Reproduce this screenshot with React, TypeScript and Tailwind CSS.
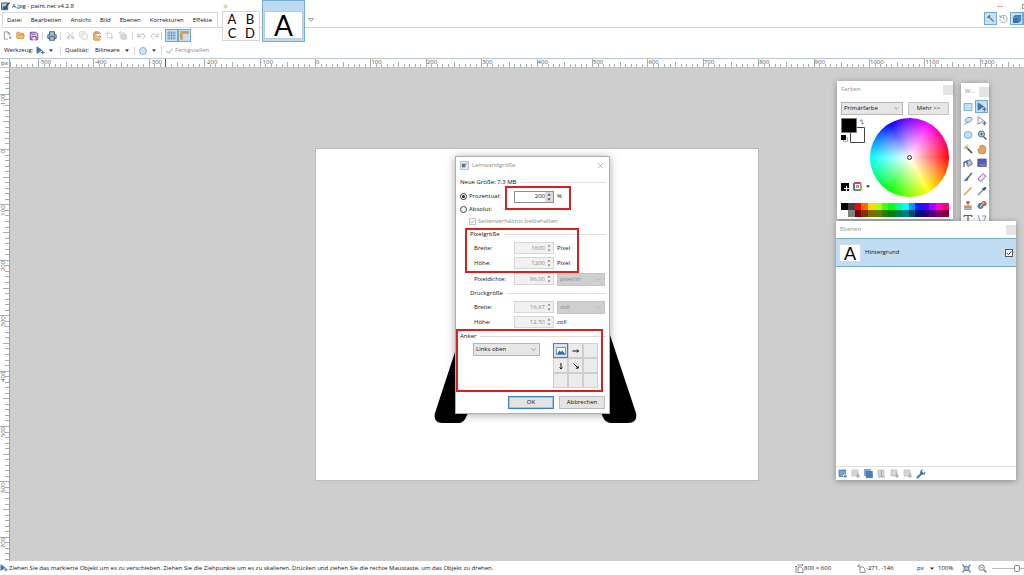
import type { ReactNode } from "react";
import {
  ChevronDown,
  ClipboardPaste,
  Copy,
  Crop,
  FolderOpen,
  Printer,
  Save,
  Scissors,
  X
} from "lucide-react";

const menus = ["Datei", "Bearbeiten", "Ansicht", "Bild", "Ebenen", "Korrekturen", "Effekte"];

const palette = [
  ["#000000", "#404040", "#ff0000", "#ff6a00", "#ffd800", "#b6ff00", "#4cff00", "#00ff21", "#00ff90", "#00ffff", "#0094ff", "#0026ff", "#4800ff", "#b200ff", "#ff00dc", "#ff006e"],
  ["#ffffff", "#808080", "#7f0000", "#7f3300", "#7f6a00", "#5b7f00", "#267f00", "#007f0e", "#007f46", "#007f7f", "#004a7f", "#00137f", "#21007f", "#57007f", "#7f006e", "#7f0037"]
];

const UNIT = 55.4;

function MoveIcon({ className = "size-[9px]", hollow = false }: { className?: string; hollow?: boolean }) {
  return (
    <svg viewBox="0 0 10 10" className={`shrink-0 ${className}`} aria-hidden="true">
      <path d="M1 .8v7.4L6.6 4.6z" fill={hollow ? "#fff" : "#3f78a8"} stroke={hollow ? "#6b7580" : "#3f78a8"} strokeWidth=".8" />
      <path d="M7.4 5v4.4M5.2 7.2h4.4" stroke="#4e6f8c" strokeWidth="1.1" />
    </svg>
  );
}

function HorizontalRuler() {
  const ticks = Array.from({ length: 184 }, (_, i) => i - 55);
  return (
    <div className="flex h-[10px] shrink-0 border-y border-[#b9c6cc] bg-white">
      <span className="w-[10px] shrink-0 border-r border-[#8fa3ad] text-center text-[6px] leading-[8px] text-[#444]">px</span>
      <svg className="h-2 min-w-0 flex-1" aria-hidden="true">
        {ticks.map((t) => {
          const x = Math.round(305 + (t * UNIT) / 10) + 0.5;
          const top = t % 10 === 0 ? 0 : t % 5 === 0 ? 3 : 5;
          return <path key={t} d={`M${x} ${top}V8`} stroke="#9fb0b8" />;
        })}
        {ticks.filter((t) => t % 10 === 0).map((t) => (
          <text key={t} x={306 + (t * UNIT) / 10} y="5" fontSize="6" fill="#555">{t * 10}</text>
        ))}
        <path d="M155.500 0V8" stroke="#4d6570" />
      </svg>
    </div>
  );
}

function VerticalRuler() {
  const ticks = Array.from({ length: 90 }, (_, i) => i - 14);
  return (
    <svg className="h-full w-[10px] shrink-0 border-r border-[#8fa3ad] bg-white" aria-hidden="true">
      {ticks.map((t) => {
        const y = Math.round(81 + (t * UNIT) / 10) + 0.5;
        const left = t % 10 === 0 ? 0 : t % 5 === 0 ? 3 : 5;
        return <path key={t} d={`M${left} ${y}H9`} stroke="#9fb0b8" />;
      })}
      {ticks.filter((t) => t % 10 === 0).map((t) => (
        <text key={t} transform={`translate(5 ${82 + (t * UNIT) / 10}) rotate(-90)`} textAnchor="end" fontSize="6" fill="#555">{t * 10}</text>
      ))}
    </svg>
  );
}

function Divider() {
  return <span className="h-2 w-px shrink-0 bg-[#d4d4d4]" />;
}

function ToolButton({ label, active, children }: { label: string; active?: boolean; children: ReactNode }) {
  return (
    <button
      type="button"
      aria-label={label}
      className={`flex h-[13px] w-[13px] shrink-0 items-center justify-center ${active ? "border border-[#6fa9cf] bg-[#c3e0f5]" : ""}`}
    >
      {children}
    </button>
  );
}

function DownArrow() {
  return (
    <svg viewBox="0 0 4 3" className="h-[3px] w-1 shrink-0" aria-hidden="true">
      <path d="M0 .5h4L2 2.800z" fill="#222" />
    </svg>
  );
}

function Header() {
  return (
    <header className="relative z-10 flex h-7 shrink-0">
      <div className="flex w-[218px] shrink-0 flex-col">
        <div className="flex h-3 items-center gap-[2px] pl-px">
          <svg viewBox="0 0 10 10" className="size-[9px]" aria-hidden="true">
            <path d="M.5 1h7v7.500h-7z" fill="#b8c9de" stroke="#35507c" />
            <path d="M2 5h5v3H2z" fill="#35507c" />
            <path d="M9.500.5 5 5.500" stroke="#24405f" strokeWidth="1.400" />
          </svg>
          <h1>A.jpg - paint.net v4.2.8</h1>
        </div>
        <nav className="ml-[2px] flex h-4 items-center gap-[9px] border border-[#d8d8d8] pl-1">
          {menus.map((menu) => (
            <button key={menu} type="button">{menu}</button>
          ))}
        </nav>
      </div>

      <div className="flex flex-1 items-start border-b border-[#d0d0d0]">
        <button type="button" aria-label="Bild 1" className="relative ml-1 mt-[11px] grid h-[30px] w-[38px] shrink-0 grid-cols-2 place-items-center border border-[#d6d6d6] bg-white font-[Lato] text-[13px] leading-[14px] text-black">
          <span>A</span>
          <span>B</span>
          <span>C</span>
          <span>D</span>
          <svg viewBox="0 0 6 6" className="absolute -top-2 left-0 size-[5px]" aria-hidden="true">
            <path d="M3 0v6M0 3h6M1 1l4 4M5 1 1 5" stroke="#e5cf96" />
          </svg>
        </button>
        <button type="button" aria-label="Bild 2" className="ml-[2px] flex h-[42px] w-[43px] shrink-0 items-end border border-[#74aed0] bg-[#bddcf4] px-px pb-[2px]">
          <span className="flex h-7 w-full items-center justify-center border border-[#b6cad8] bg-white font-[Lato] text-[28px] leading-[28px] text-black">A</span>
        </button>
        <button type="button" aria-label="Bildliste" className="ml-[3px] mt-[18px]">
          <svg viewBox="0 0 6 4" className="h-1 w-[6px]" aria-hidden="true">
            <path d="M.5.5h5L3 3.300z" fill="none" stroke="#8c8c8c" strokeWidth=".8" />
          </svg>
        </button>

        <div className="-mr-[1px] ml-auto flex flex-col">
          <div className="flex h-3 items-center justify-end gap-[19px] text-[#999]">
            <span className="h-px w-[6px] bg-[#c9a9a9]" />
            <span className="h-[5px] w-[3px] border border-r-0 border-[#999]" />
          </div>
          <div className="flex items-center">
            <ToolButton label="Werkzeuge" active>
              <svg viewBox="0 0 10 10" className="size-[9px]" aria-hidden="true">
                <path d="m3 3 5.500 5.500" stroke="#596c7d" strokeWidth="1.200" />
                <path d="m1 3.500 3-2.500 1.200 1L2.400 4.800z" fill="#596c7d" />
              </svg>
            </ToolButton>
            <ToolButton label="Verlauf">
              <svg viewBox="0 0 10 10" className="size-[9px]" fill="none" stroke="#8795a0" aria-hidden="true">
                <path d="M1.500 3.500a4 4 0 1 1-.5 2M1 1.200v2.500h2.500M5 3v2.400h2" strokeWidth=".9" />
              </svg>
            </ToolButton>
            <ToolButton label="Ebenen" active>
              <svg viewBox="0 0 10 10" className="size-[10px]" aria-hidden="true">
                <path d="M3 1h6v5.500L7 9H1V3.500z" fill="#3774ac" />
                <path d="M1.500 3.500H7V9M3 2h5v6" fill="none" stroke="#6fa2cd" strokeWidth=".6" />
              </svg>
            </ToolButton>
            <span className="h-[13px] w-[2px] bg-[#6fa9cf]" />
          </div>
        </div>
      </div>
    </header>
  );
}

function Toolbars() {
  return (
    <>
      <div className="flex h-[15px] shrink-0 items-center pl-px">
        <ToolButton label="Neu">
          <svg viewBox="0 0 10 10" className="size-[9px]" fill="none" stroke="#777" strokeWidth=".8" aria-hidden="true">
            <path d="M7.500 5V3L5.500 1H1.500v8h4M5.500 1v2h2M8 6v3M6.500 7.500h3" />
          </svg>
        </ToolButton>
        <ToolButton label="Öffnen"><FolderOpen className="size-[9px] fill-[#f2c36b] text-[#c58a35]" /></ToolButton>
        <ToolButton label="Speichern"><Save className="size-[10px] fill-[#eadcf0] text-[#7b4f9b]" strokeWidth={2.5} /></ToolButton>
        <span className="w-[2px]" />
        <Divider />
        <span className="w-[2px]" />
        <ToolButton label="Drucken"><Printer className="size-[10px] fill-[#a9c2dc] text-[#4c6480]" strokeWidth={2.5} /></ToolButton>
        <span className="w-[2px]" />
        <Divider />
        <span className="w-[3px]" />
        <ToolButton label="Ausschneiden"><Scissors className="size-[9px] -rotate-90 text-[#b5b5b5]" /></ToolButton>
        <ToolButton label="Kopieren"><Copy className="size-[9px] text-[#bdbdbd]" /></ToolButton>
        <ToolButton label="Einfügen"><ClipboardPaste className="size-[10px] fill-[#edbd78] text-[#b98340]" /></ToolButton>
        <ToolButton label="Zuschneiden"><Crop className="size-[9px] text-[#c0c0c0]" /></ToolButton>
        <ToolButton label="Auswahl aufheben">
          <svg viewBox="0 0 10 10" className="size-[9px]" fill="none" stroke="#bdbdbd" aria-hidden="true">
            <path d="M1 2h7M2.500 0v7h6V3" strokeDasharray="1.500 .6" />
            <path d="M4 4h5v5H4z" fill="#ddd" />
          </svg>
        </ToolButton>
        <span className="w-[3px]" />
        <Divider />
        <span className="w-[2px]" />
        <ToolButton label="Rückgängig">
          <svg viewBox="0 0 10 8" className="h-2 w-[9px]" fill="none" stroke="#aaa" aria-hidden="true"><path d="M1 1v4h4M1.500 4.500C3 1.500 8 1 8.500 3.500 8.800 5.500 7.500 6.500 6 7.500" /></svg>
        </ToolButton>
        <ToolButton label="Wiederholen">
          <svg viewBox="0 0 10 8" className="h-2 w-[9px] -scale-x-100" fill="none" stroke="#bbb" aria-hidden="true"><path d="M1 1v4h4M1.500 4.500C3 1.500 8 1 8.500 3.500 8.800 5.500 7.500 6.500 6 7.500" /></svg>
        </ToolButton>
        <Divider />
        <span className="w-[3px]" />
        <ToolButton label="Pixelraster" active>
          <svg viewBox="0 0 9 9" className="size-[9px]" aria-hidden="true"><path d="M0 2h9M0 4.500h9M0 7h9M2 0v9M4.500 0v9M7 0v9" stroke="#6f93b3" strokeWidth=".8" /></svg>
        </ToolButton>
        <ToolButton label="Lineale" active>
          <svg viewBox="0 0 9 9" className="size-[9px]" aria-hidden="true">
            <path d="M0 0h9v3H3v6H0z" fill="#d9a969" />
            <path d="M3 0v2M5 0v2M7 0v2M0 4h2M0 6h2" stroke="#9c6f38" strokeWidth=".5" />
          </svg>
        </ToolButton>
      </div>

      <div className="flex h-[15px] shrink-0 items-center pl-1">
        <span className="w-8">Werkzeug:</span>
        <button type="button" aria-label="Werkzeug wählen" className="flex w-6 items-center gap-1">
          <MoveIcon />
          <DownArrow />
        </button>
        <Divider />
        <label htmlFor="quality" className="ml-1 w-[30px]">Qualität:</label>
        <span className="flex w-[39px] items-center">
          <select id="quality" className="w-[30px] appearance-none">
            <option>Bilineare</option>
          </select>
          <DownArrow />
        </span>
        <Divider />
        <button type="button" aria-label="Auswahlmodus" className="ml-1 flex w-[22px] items-center gap-[5px]">
          <span className="size-2 rounded-full border border-[#7fb0d4] bg-[#cfe6f7]" />
          <DownArrow />
        </button>
        <Divider />
        <button type="button" disabled className="ml-1 flex items-center gap-[2px] text-[#8d8d8d]">
          <svg viewBox="0 0 7 6" className="h-[6px] w-[7px]" fill="none" stroke="#999" aria-hidden="true"><path d="m.5 3 2 2.200L6.500.5" /></svg>
          Fertigstellen
        </button>
      </div>
    </>
  );
}

function Spinner({ id, label, value, disabled }: { id: string; label: string; value: string; disabled?: boolean }) {
  return (
    <span className={`flex h-3 w-10 shrink-0 border ${disabled ? "border-[#d5d5d5] bg-[#f1f1f1] text-[#8a8a8a]" : "border-[#8d8d8d] bg-white"}`}>
      <input id={id} aria-label={label} defaultValue={value} disabled={disabled} className="min-w-0 flex-1 text-right" />
      <svg viewBox="0 0 8 10" className={`h-[10px] w-2 ${disabled ? "" : "bg-[#dcdcdc]"}`} aria-hidden="true">
        <path d="M2.500 3.500h3L4 1.500zM2.500 6.500h3L4 8.500z" fill={disabled ? "#7d7d7d" : "#333"} />
      </svg>
    </span>
  );
}

function Select({ label, value, disabled, className }: { label: string; value: string; disabled?: boolean; className: string }) {
  return (
    <span className={`relative flex h-[13px] items-center border ${disabled ? "border-[#c4c4c4] bg-[#cfcfcf] text-[#858585]" : "border-[#b5b5b5] bg-[#e6e6e6]"} ${className}`}>
      <select aria-label={label} disabled={disabled} className="w-full appearance-none pl-[2px] opacity-100">
        <option>{value}</option>
      </select>
      <ChevronDown className={`pointer-events-none absolute right-[2px] size-[7px] ${disabled ? "text-[#aaa]" : "text-[#666]"}`} />
    </span>
  );
}

function GroupTitle({ children, className = "" }: { children: ReactNode; className?: string }) {
  return (
    <h3 className={`flex items-center gap-1 ${className}`}>
      {children}
      <span className="h-px flex-1 bg-[#dedede]" />
    </h3>
  );
}

function Anchor() {
  const arrows = ["", "M1.500 5h6M6 3.500 7.500 5 6 6.500", "", "M5 2v6M3.500 6.500 5 8l1.500-1.500", "M2.500 2.500l4.500 4.500M7.200 4.800v2.400H4.800", "", "", "", ""];
  return (
    <div className="grid grid-cols-3">
      {arrows.map((d, i) => (
        <button
          key={i}
          type="button"
          aria-label={`Anker ${i + 1}`}
          className={`flex size-[15px] items-center justify-center border ${i === 0 ? "border-[#3d86b8] bg-[#cfe5f5]" : "border-[#cfcfcf] bg-[#ececec]"}`}
        >
          {i === 0 && (
            <svg viewBox="0 0 10 8" className="h-2 w-[10px]" aria-hidden="true">
              <path d="M.5.5h9v7h-9z" fill="#fff" stroke="#5b7f9c" strokeWidth=".8" />
              <path d="m1 7 2.500-3.500L5 5l1.500-1.500L9 7z" fill="#386b95" />
            </svg>
          )}
          {d && <svg viewBox="0 0 10 10" className="size-[10px]" fill="none" stroke="#111" aria-hidden="true"><path d={d} /></svg>}
        </button>
      ))}
    </div>
  );
}

function CanvasSizeDialog() {
  return (
    <section role="dialog" aria-label="Leinwandgröße" className="absolute left-[445px] top-[88px] w-[155px] border border-[#b0b0b0] bg-white pb-1 shadow-[0_1px_8px_rgba(0,0,0,0.35)]">
      <div className="flex h-[17px] items-center gap-[3px] px-1 text-[#8a8a8a]">
        <svg viewBox="0 0 10 10" className="size-[9px]" aria-hidden="true">
          <path d="M.5.5h9v9h-9z" fill="#e8eef4" stroke="#aab4bd" />
          <path d="M2 3h4v4H2z" fill="#4d6f90" />
          <path d="M8 2 5 6" stroke="#8a98a5" />
        </svg>
        <h2>Leinwandgröße</h2>
        <button type="button" aria-label="Schließen" className="ml-auto"><X className="size-[9px]" strokeWidth={1.5} /></button>
      </div>

      <GroupTitle className="h-4 pl-1 pr-[3px]">Neue Größe: 7,3 MB</GroupTitle>
      <div className="flex h-[13px] items-center pl-1">
        <label className="flex w-[54px] items-center gap-[2px]">
          <input type="radio" name="mode" defaultChecked className="size-[7px] appearance-none rounded-full border border-[#333] bg-[#222] p-px [background-clip:content-box]" />
          Prozentual:
        </label>
        <Spinner id="percent" label="Prozent" value="200" />
        <span className="ml-[3px]">%</span>
      </div>
      <label className="flex h-3 items-center gap-[2px] pl-1">
        <input type="radio" name="mode" className="size-[7px] appearance-none rounded-full border border-[#444]" />
        Absolut:
      </label>
      <label className="flex h-3 items-center gap-[2px] pl-[13px] text-[#8a8a8a]">
        <span className="relative flex">
          <input type="checkbox" defaultChecked disabled className="size-[7px] appearance-none border border-[#c4c4c4]" />
          <svg viewBox="0 0 7 7" className="absolute inset-0 size-[7px]" fill="none" stroke="#aaa" aria-hidden="true"><path d="m1.500 3.500 1.500 1.500L5.500 2" /></svg>
        </span>
        Seitenverhältnis beibehalten
      </label>

      <GroupTitle className="h-[14px] pl-[14px] pr-[3px]">Pixelgröße</GroupTitle>
      <div className="flex h-[14px] items-center pl-[18px]">
        <label htmlFor="pixel-width" className="w-10">Breite:</label>
        <Spinner id="pixel-width" label="Breite in Pixel" value="1600" disabled />
        <span className="ml-[3px]">Pixel</span>
      </div>
      <div className="flex h-4 items-center pl-[18px]">
        <label htmlFor="pixel-height" className="w-10">Höhe:</label>
        <Spinner id="pixel-height" label="Höhe in Pixel" value="1200" disabled />
        <span className="ml-[3px]">Pixel</span>
      </div>
      <div className="flex h-4 items-center pl-[18px]">
        <label htmlFor="density" className="w-10">Pixeldichte:</label>
        <Spinner id="density" label="Pixeldichte" value="96,00" disabled />
        <Select label="Einheit der Dichte" value="pixel/in" disabled className="ml-[3px] w-12" />
      </div>
      <GroupTitle className="h-3 pl-[14px] pr-[3px]">Druckgröße</GroupTitle>
      <div className="flex h-4 items-center pl-[18px]">
        <label htmlFor="print-width" className="w-10">Breite:</label>
        <Spinner id="print-width" label="Druckbreite" value="16,67" disabled />
        <Select label="Druckeinheit" value="zoll" disabled className="ml-[3px] w-12" />
      </div>
      <div className="flex h-[14px] items-center pl-[18px]">
        <label htmlFor="print-height" className="w-10">Höhe:</label>
        <Spinner id="print-height" label="Druckhöhe" value="12,50" disabled />
        <span className="ml-[3px]">zoll</span>
      </div>

      <GroupTitle className="h-[14px] pl-1 pr-[3px]">Anker</GroupTitle>
      <div className="flex items-start justify-between pl-[17px] pr-[11px]">
        <Select label="Anker" value="Links oben" className="w-[67px]" />
        <Anchor />
      </div>
      <div className="mt-2 flex justify-end gap-[5px] pr-1">
        <button type="button" className="h-[13px] w-[46px] border border-[#3d86b8] bg-[#e3e3e3] leading-[11px] ring-1 ring-inset ring-[#9cc6e4]">OK</button>
        <button type="button" className="h-[13px] w-[46px] border border-[#bdbdbd] bg-[#e3e3e3] leading-[11px]">Abbrechen</button>
      </div>

      {/* highlighted areas */}
      <div className="pointer-events-none absolute left-[49px] top-[29px] h-6 w-[66px] border-2 border-[#d8201f]" />
      <div className="pointer-events-none absolute left-[9px] top-[71px] h-[45px] w-[114px] border-2 border-[#d8201f]" />
      <div className="pointer-events-none absolute left-0 top-[172px] h-[63px] w-[147px] border-2 border-[#d8201f]" />
    </section>
  );
}

function PanelTitle({ children }: { children: ReactNode }) {
  return (
    <div className="flex h-[17px] shrink-0 items-center justify-between pl-1 text-[#8f8f8f]">
      <h2>{children}</h2>
      <button type="button" aria-label="Schließen" className="size-[10px] bg-[#e4e4e4]" />
    </div>
  );
}

function ColorsPanel() {
  return (
    <section className="absolute right-[71px] top-[13px] w-[116px] bg-white pb-[2px] shadow-[0_1px_6px_rgba(0,0,0,0.35)]">
      <PanelTitle>Farben</PanelTitle>
      <div className="flex items-center justify-between px-1 pt-1">
        <Select label="Farbe" value="Primärfarbe" className="w-[62px]" />
        <button type="button" className="h-[13px] w-[41px] border border-[#c4c4c4] bg-[#e6e6e6] leading-[11px]">Mehr &gt;&gt;</button>
      </div>
      <div className="flex justify-between px-1 pt-[3px]">
        <div className="flex w-6 flex-col justify-between pb-[6px]">
          <svg viewBox="0 0 25 26" className="h-[26px] w-[25px]" aria-hidden="true">
            <path d="M9.500 9.500h14v15h-14z" fill="#fff" stroke="#444" />
            <path d="M.5.5h15v14H.5z" fill="#000" stroke="#777" />
            <path d="M19 2.500h2.500V6M20.500 1 19 2.500 20.500 4M20 5l1.500 1.500L23 5" fill="none" stroke="#7793ab" strokeWidth=".8" />
            <path d="M2.500 19.500h4v4h-4z" fill="#fff" stroke="#aaa" />
            <path d="M0 17h5v5H0z" fill="#000" />
          </svg>
          <div className="flex items-center gap-1">
            <svg viewBox="0 0 8 8" className="size-2 shrink-0" aria-hidden="true">
              <path d="M0 0h8v8H0z" fill="#000" />
              <path d="M5.500 3v5M3 5.500h5" stroke="#fff" strokeWidth="1.200" />
            </svg>
            <svg viewBox="0 0 9 9" className="size-[9px] shrink-0" fill="none" strokeWidth="2" aria-hidden="true">
              <path d="M1 1h7" stroke="#b75064" />
              <path d="M8 1v7" stroke="#e29b48" />
              <path d="M8 8H1" stroke="#669865" />
              <path d="M1 8V1" stroke="#5371b5" />
              <path d="M3.500 3.500h2v2h-2z" stroke="#9a748e" strokeWidth="1" />
            </svg>
            <DownArrow />
          </div>
        </div>
        <div className="flex size-[79px] items-center justify-center rounded-full bg-[radial-gradient(closest-side,#fff,rgba(255,255,255,0)),conic-gradient(from_90deg,#f00,#ff0,#0f0,#0ff,#00f,#f0f,#f00)]">
          <span className="size-[5px] rounded-full border border-[#333] bg-white" />
        </div>
      </div>
      <div className="mt-[6px] grid grid-cols-16 px-1">
        {palette.flat().map((color) => (
          <span key={color} className="h-[7px]" style={{ backgroundColor: color }} />
        ))}
      </div>
    </section>
  );
}

function ToolsPanel() {
  const tools: [string, ReactNode][] = [
    ["Rechteckauswahl", <path key="a" d="M1 1.500h8v7H1z" fill="#c4e0f5" stroke="#6da0c8" strokeWidth=".8" />],
    ["Verschieben", <MoveIcon key="b" className="size-[10px]" />],
    ["Lassoauswahl", <g key="c" fill="none" stroke="#6797bd"><path d="M3 6C0 3 5 1 8 1.500 11 3 7 7 4 6.500z" fill="#c4e0f5" /><path d="M4 6 1.500 9" /></g>],
    ["Auswahl verschieben", <MoveIcon key="d" className="size-[10px]" hollow />],
    ["Ellipsenauswahl", <ellipse key="e" cx="5" cy="5" rx="4" ry="3.500" fill="#c4e0f5" stroke="#6da0c8" strokeWidth=".8" />],
    ["Zoom", <g key="f"><circle cx="4.500" cy="4" r="3" fill="#a9d0e9" stroke="#4e6c86" /><path d="m6.500 6.500 3 3" stroke="#4e5f70" strokeWidth="1.500" /><path d="M3 4h3M4.500 2.500v3" stroke="#35607f" strokeWidth=".7" /></g>],
    ["Zauberstab", <g key="g"><path d="m3 3 6 6" stroke="#444" strokeWidth="1.600" /><path d="M1 1.500 5 5M4 0v3M0 4h3" stroke="#d3a756" strokeWidth=".8" /></g>],
    ["Hand", <path key="h" d="M2 9.500.8 5.500l1-.7 1 1V2l1-.5.7.5.5-1 1 .1.500.9.8-.2.600.9.8.3V7L8 9.500z" fill="#e2a65e" stroke="#a86d32" strokeWidth=".6" />],
    ["Füllen", <g key="i"><path d="m3 4 4-2.500L9.500 6 5 8.500z" fill="#b9c2cb" stroke="#59636e" strokeWidth=".8" /><path d="M1 9V4.500L4 3v3" fill="none" stroke="#4876a3" strokeWidth="1.400" /></g>],
    ["Farbverlauf", <g key="j"><path d="M.8 1h8.500v7.500H.8z" fill="#4d5fc1" stroke="#555e80" strokeWidth=".8" /><path d="M3 6h6v2H3z" fill="#936cc7" /></g>],
    ["Pinsel", <g key="k"><path d="M9 1 4.500 6" stroke="#59636e" strokeWidth="1.500" /><path d="M4.500 5C2.500 5.500 3 8 .5 9c3 .5 5-.5 5-3z" fill="#3d73a4" /></g>],
    ["Radierer", <path key="l" d="M1 7 6 1.500 9 4 4.500 9H2.500z" fill="#f2e5f5" stroke="#9a62ab" />],
    ["Stift", <path key="m" d="m1 9 7.500-7.500" stroke="#d8a45c" strokeWidth="1.600" />],
    ["Pipette", <g key="n"><path d="m1 9 5-5" stroke="#7e98ac" strokeWidth="1.600" /><path d="M5 3l2 2 2.500-3L8 .8z" fill="#344e68" /></g>],
    ["Klonstempel", <g key="o"><circle cx="5" cy="2.500" r="1.800" fill="#a66c49" /><path d="M4.300 3h1.500v2.500h3V8H1V5.500h3.300z" fill="#c79567" /><path d="M1 9h8" stroke="#666" /></g>],
    ["Umfärben", <g key="p"><circle cx="3.500" cy="6" r="3" fill="#557fa7" /><circle cx="6.800" cy="3.500" r="2.600" fill="#c85749" /><path d="m3 7 4-5" stroke="#d4dfe8" /></g>],
    ["Text", <path key="q" d="M1 1.500h8M5 1.500V9M3.500 9h3M1.200 1v2M8.800 1v2" stroke="#5a6570" strokeWidth="1.200" />],
    ["Linie", <path key="r" d="m1 1 2.500 7M5 2h4L6 8.500h3.500" fill="none" stroke="#6e92b0" strokeWidth=".9" />]
  ];
  return (
    <section className="absolute right-[35px] top-[15px] w-7 bg-white shadow-[0_1px_6px_rgba(0,0,0,0.35)]">
      <PanelTitle>W...</PanelTitle>
      <div className="grid grid-cols-2 gap-y-px">
        {tools.map(([name, icon], i) => (
          <ToolButton key={name} label={name} active={i === 1}>
            <svg viewBox="0 0 10 10" className="size-[10px]" aria-hidden="true">{icon}</svg>
          </ToolButton>
        ))}
      </div>
    </section>
  );
}

function LayersPanel() {
  const actions = ["Ebene löschen", "Ebene duplizieren", "Ebene vereinen", "Nach oben", "Nach unten"];
  return (
    <section className="absolute right-2 top-[153px] flex h-[259px] w-[180px] flex-col bg-white shadow-[0_1px_6px_rgba(0,0,0,0.35)]">
      <PanelTitle>Ebenen</PanelTitle>
      <label className="flex h-[29px] shrink-0 items-center border-y border-[#79aebc] bg-[#bfdcf3] px-[3px]">
        <span className="flex h-[18px] w-[22px] items-center justify-center border border-[#d4dde5] bg-white font-[Lato] text-[18px] leading-[18px] text-black">A</span>
        <span className="ml-1">Hintergrund</span>
        <span className="relative ml-auto flex">
          <input type="checkbox" defaultChecked className="size-2 appearance-none border border-[#555] bg-white" />
          <svg viewBox="0 0 8 8" className="absolute inset-0 size-2" fill="none" stroke="#333" aria-hidden="true"><path d="m1.800 4 1.700 1.800L6.400 2.200" /></svg>
        </span>
      </label>
      <div className="flex-1" />
      <div className="flex h-[14px] items-center border-t border-[#e2e2e2]">
        <ToolButton label="Neue Ebene">
          <svg viewBox="0 0 9 9" className="size-[9px]" aria-hidden="true"><path d="M1 1h6.500v6.500H1z" fill="#72a3cb" stroke="#3f78a8" strokeWidth=".8" /><path d="M7 5v4M5 7h4" stroke="#fff" strokeWidth="2" /><path d="M7 5.500v3.500M5.500 7.200H9" stroke="#3f78a8" /></svg>
        </ToolButton>
        {actions.map((name, i) => (
          <ToolButton key={name} label={name}>
            {i === 1 ? (
              <svg viewBox="0 0 9 9" className="size-[9px]" aria-hidden="true"><path d="M0 0h7v7H0z" fill="#7eaad0" /><path d="M1.800 2h7v7h-7z" fill="#4181b8" /></svg>
            ) : (
              <svg viewBox="0 0 9 9" className="size-[9px]" aria-hidden="true"><path d="M1 1h6v6H1z" fill="#d5d5d5" stroke="#c0c0c0" strokeWidth=".8" /><path d={i === 2 ? "M4.500 1v7M1 8h7" : "M7 4v5M5 7h4"} stroke="#a3a3a3" /></svg>
            )}
          </ToolButton>
        ))}
        <ToolButton label="Eigenschaften">
          <svg viewBox="0 0 10 10" className="size-[10px]" aria-hidden="true"><path d="m1.500 8.500 4-4" stroke="#3f78a8" strokeWidth="2" strokeLinecap="round" /><path d="M9.300 2.800A2.600 2.600 0 1 1 7 .6L5.900 2.400l1.500 1.500z" fill="#3f78a8" /></svg>
        </ToolButton>
      </div>
    </section>
  );
}

function StatusBar() {
  return (
    <footer className="flex h-[14px] shrink-0 items-center">
      <MoveIcon className="size-2" />
      <p className="ml-px whitespace-nowrap">
        Ziehen Sie das markierte Objekt um es zu verschieben. Ziehen Sie die Ziehpunkte um es zu skalieren. Drücken und ziehen Sie die rechte Maustaste, um das Objekt zu drehen.
      </p>
      <div className="ml-auto flex shrink-0 items-center">
        <span className="flex w-[62px] items-center">
          <svg viewBox="0 0 9 9" className="size-[9px]" fill="none" stroke="#68747d" strokeWidth=".8" aria-hidden="true"><path d="M3 3h3l2 2v3.500H3zM1 2v7M2 1h6M0 3l1-1 1 1M7 0l1 1-1 1" /></svg>
          800 × 600
        </span>
        <span className="flex w-[60px] items-center">
          <svg viewBox="0 0 9 9" className="size-[9px]" fill="none" stroke="#68747d" strokeWidth=".8" aria-hidden="true"><path d="M3 3h3l2 2v3.500H3zM0 2h3M2 0v3" /></svg>
          -271, -146
        </span>
        <button type="button" className="flex w-[21px] items-center gap-[6px]">px <DownArrow /></button>
        <span className="w-6">100%</span>
        <button type="button" aria-label="An Fenster anpassen">
          <svg viewBox="0 0 10 10" className="size-[9px]" aria-hidden="true"><path d="M2.500 3h5v4h-5z" fill="#b1d0e8" stroke="#466c8b" /><path d="M.5.800 2.500 3M9.500.8 7.500 3M.5 9.200 2.500 7M9.500 9.200 7.500 7" stroke="#466c8b" strokeWidth="1.200" /></svg>
        </button>
        <button type="button" aria-label="Verkleinern" className="ml-[7px]">
          <svg viewBox="0 0 10 10" className="size-[9px]" fill="none" stroke="#5d6972" aria-hidden="true"><circle cx="4" cy="4" r="3" /><path d="m6.300 6.300 3 3" strokeWidth="1.500" /><path d="M2.500 4h3" strokeWidth=".7" /></svg>
        </button>
        <input
          type="range"
          aria-label="Zoom"
          defaultValue={86}
          className="ml-[5px] h-2 w-8 appearance-none bg-[linear-gradient(#b9b9b9,#b9b9b9)] bg-[length:100%_1px] bg-center bg-no-repeat [&::-webkit-slider-thumb]:h-[7px] [&::-webkit-slider-thumb]:w-[6px] [&::-webkit-slider-thumb]:appearance-none [&::-webkit-slider-thumb]:rounded-[2px] [&::-webkit-slider-thumb]:border [&::-webkit-slider-thumb]:border-[#888] [&::-webkit-slider-thumb]:bg-white"
        />
      </div>
    </footer>
  );
}

export default function App() {
  return (
    <div className="flex h-screen flex-col overflow-hidden bg-white font-['Open_Sans','Noto_Sans',sans-serif] text-[6px] leading-[9px] text-[#111]">
      <Header />
      <Toolbars />
      <HorizontalRuler />
      <main className="flex min-h-0 flex-1">
        <VerticalRuler />
        <div className="relative min-w-0 flex-1 overflow-hidden bg-[#cecece]">
          <div className="absolute left-[305px] top-[80px] h-[333px] w-[444px] border border-[#bbb] bg-white">
            <svg viewBox="0 0 442 331" className="size-full" aria-hidden="true">
              <path d="M186 60 119 264Q117 274 126 274h17q5 0 8-8L222 60z" />
              <path d="M252 60 320 264Q322 274 312 274h-17q-6 0-9-8L218 60z" />
            </svg>
          </div>
          <ColorsPanel />
          <ToolsPanel />
          <LayersPanel />
          <CanvasSizeDialog />
        </div>
      </main>
      <StatusBar />
    </div>
  );
}
